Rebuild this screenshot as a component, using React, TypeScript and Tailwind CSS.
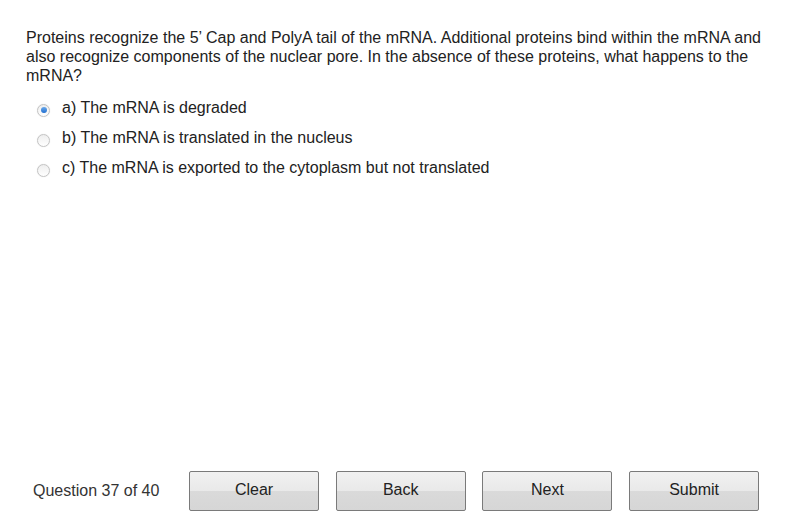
import React, { useState } from "react"

const options = [
  { id: "a", label: "a) The mRNA is degraded" },
  { id: "b", label: "b) The mRNA is translated in the nucleus" },
  { id: "c", label: "c) The mRNA is exported to the cytoplasm but not translated" },
]

const buttons = ["Clear", "Back", "Next", "Submit"]

function Radio({ checked }: { checked: boolean }) {
  return (
    <span className="mt-[6px] flex h-[13px] w-[13px] shrink-0 items-center justify-center rounded-full border border-[#c4c4c4] bg-gradient-to-b from-[#eeeeee] to-[#ffffff] shadow-[0_0_1px_rgba(0,0,0,0.15)]">
      {checked && (
        <span className="h-[6px] w-[6px] rounded-full bg-gradient-to-b from-[#6aa9ea] to-[#1f6fd0]" />
      )}
    </span>
  )
}

export default function App() {
  const [answer, setAnswer] = useState("a")

  return (
    <div
      className="flex h-[527px] w-[790px] flex-col bg-white text-[16px] text-[#222]"
      style={{ fontFamily: '"Liberation Sans", Arial, sans-serif' }}
    >
      {/* Question */}
      <p className="pl-[26px] pr-[24px] pt-[28px] leading-[19px]">
        Proteins recognize the 5’ Cap and PolyA tail of the mRNA. Additional proteins bind within the mRNA and
        also recognize components of the nuclear pore. In the absence of these proteins, what happens to the
        mRNA?
      </p>

      {/* Answers */}
      <div className="mt-[7px] flex flex-col pl-[37px]">
        {options.map((o) => (
          <label
            key={o.id}
            onClick={() => setAnswer(o.id)}
            className="flex h-[30px] cursor-pointer items-center gap-[12px]"
          >
            <Radio checked={answer === o.id} />
            <span className="leading-[19px]">{o.label}</span>
          </label>
        ))}
      </div>

      {/* Footer */}
      <div className="mt-auto flex items-center pb-[16px] pl-[33px]">
        <span className="w-[156px] text-[#333]">Question 37 of 40</span>
        <div className="flex gap-[16.7px]">
          {buttons.map((b) => (
            <button
              key={b}
              type="button"
              className="h-[40px] w-[130px] rounded-[2px] border border-[#7a7a7a] bg-[linear-gradient(to_bottom,#f1f1f1_0%,#e9e9e9_50%,#dadada_50%,#d6d6d6_100%)] pb-[3px] text-[#222]"
            >
              {b}
            </button>
          ))}
        </div>
      </div>
    </div>
  )
}
